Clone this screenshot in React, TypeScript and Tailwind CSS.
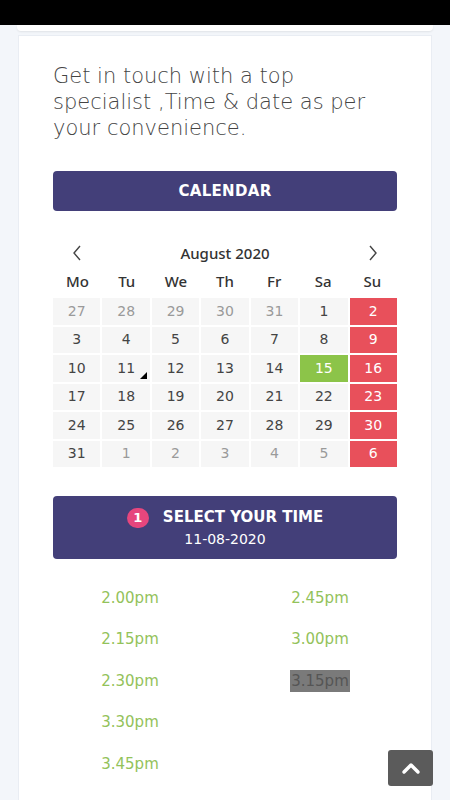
import { FC } from "react";

const weekDays = ["Mo", "Tu", "We", "Th", "Fr", "Sa", "Su"];

// [day, isOtherMonth]
const weeks: [number, boolean][][] = [
  [[27, true], [28, true], [29, true], [30, true], [31, true], [1, false], [2, false]],
  [[3, false], [4, false], [5, false], [6, false], [7, false], [8, false], [9, false]],
  [[10, false], [11, false], [12, false], [13, false], [14, false], [15, false], [16, false]],
  [[17, false], [18, false], [19, false], [20, false], [21, false], [22, false], [23, false]],
  [[24, false], [25, false], [26, false], [27, false], [28, false], [29, false], [30, false]],
  [[31, false], [1, true], [2, true], [3, true], [4, true], [5, true], [6, true]],
];

const leftTimes = ["2.00pm", "2.15pm", "2.30pm", "3.30pm", "3.45pm"];
const rightTimes = ["2.45pm", "3.00pm", "3.15pm"];

const DayCell: FC<{ day: number; muted: boolean; col: number; row: number }> = ({
  day,
  muted,
  col,
  row,
}) => {
  const isSunday = col === 6;
  const isToday = row === 2 && col === 5;
  const isSelected = row === 2 && col === 1;
  let cls = "bg-[#f6f6f6] text-[#444]";
  if (muted) cls = "bg-[#f6f6f6] text-[#9a9a9a]";
  if (isSunday) cls = "bg-[#e8505b] text-white";
  if (isToday) cls = "bg-[#8cc449] text-white";
  return (
    <div className={`relative h-[26.5px] flex items-center justify-center text-[14px] ${cls}`}>
      {day}
      {isSelected && (
        <span className="absolute right-[3px] bottom-[3px] w-0 h-0 border-l-[7px] border-l-transparent border-b-[7px] border-b-black" />
      )}
    </div>
  );
};

const TimeSlot: FC<{ time: string }> = ({ time }) => (
  <div className="h-[41.5px] flex items-center justify-center">
    {time === "3.15pm" ? (
      <span className="bg-[#7a7a7a] text-[#555] px-[1px]">{time}</span>
    ) : (
      <span className="text-[#93c25a]">{time}</span>
    )}
  </div>
);

export default function App() {
  return (
    <div
      className="relative min-h-[800px] bg-[#f3f6fa] overflow-hidden"
      style={{ fontFamily: '"DejaVu Sans", "Noto Sans", sans-serif' }}
    >
      <div className="h-[25px] bg-black" />
      <div className="mx-[17px] h-[6px] bg-white rounded-b-[4px] shadow-[0_1px_2px_rgba(0,0,0,0.08)]" />
      <div className="mx-[18px] mt-[4px] bg-white border border-[#e9edf3] px-[34px] pt-[27px] pb-[20px]">
        <p className="text-[21px] leading-[26px] text-[#444] font-extralight">
          Get in touch with a top
          <br />
          specialist ,Time &amp; date as per
          <br />
          your convenience.
        </p>

        <button className="mt-[30px] w-full h-[40px] rounded-[4px] bg-[#433f79] text-white text-[15px] font-bold tracking-[0.3px]">
          CALENDAR
        </button>

        <div className="mt-[32px] flex items-center justify-between px-[18px] h-[20px]">
          <svg width="12" height="16" viewBox="0 0 12 16" fill="none" stroke="#444" strokeWidth="1.4">
            <path d="M9 1 L3 8 L9 15" />
          </svg>
          <span
            className="text-[15px] font-medium text-[#333]"
            style={{ fontFamily: '"Noto Sans", sans-serif' }}
          >
            August 2020
          </span>
          <svg width="12" height="16" viewBox="0 0 12 16" fill="none" stroke="#444" strokeWidth="1.4">
            <path d="M3 1 L9 8 L3 15" />
          </svg>
        </div>

        <div
          className="mt-[6px] grid grid-cols-7 h-[24px] items-center"
          style={{ fontFamily: '"Noto Sans", sans-serif' }}
        >
          {weekDays.map((d) => (
            <div key={d} className="text-center text-[15px] font-medium text-[#333]">
              {d}
            </div>
          ))}
        </div>

        <div className="mt-[5px] grid grid-cols-7 gap-[2px]">
          {weeks.map((week, r) =>
            week.map(([day, muted], c) => (
              <DayCell key={`${r}-${c}`} day={day} muted={muted} col={c} row={r} />
            ))
          )}
        </div>

        <div className="mt-[29px] h-[63px] rounded-[4px] bg-[#433f79] flex flex-col items-center justify-center text-white">
          <div className="flex items-center gap-[14px]">
            <span className="w-[22px] h-[20px] rounded-full bg-[#e6467d] flex items-center justify-center text-[13px] font-bold">
              1
            </span>
            <span className="text-[15px] font-bold">SELECT YOUR TIME</span>
          </div>
          <span className="text-[14px] leading-[20px]">11-08-2020</span>
        </div>

        <div className="mt-[18px] grid grid-cols-2 gap-x-[36px] text-[15px]">
          <div>
            {leftTimes.map((t) => (
              <TimeSlot key={t} time={t} />
            ))}
          </div>
          <div>
            {rightTimes.map((t) => (
              <TimeSlot key={t} time={t} />
            ))}
          </div>
        </div>
      </div>

      <button className="absolute left-[388px] top-[750px] w-[45px] h-[36px] rounded-[3px] bg-[#5b5b5b] flex items-center justify-center">
        <svg width="20" height="14" viewBox="0 0 20 14" fill="none" stroke="white" strokeWidth="3.5" strokeLinecap="round" strokeLinejoin="round">
          <path d="M3 11 L10 4 L17 11" />
        </svg>
      </button>
    </div>
  );
}
